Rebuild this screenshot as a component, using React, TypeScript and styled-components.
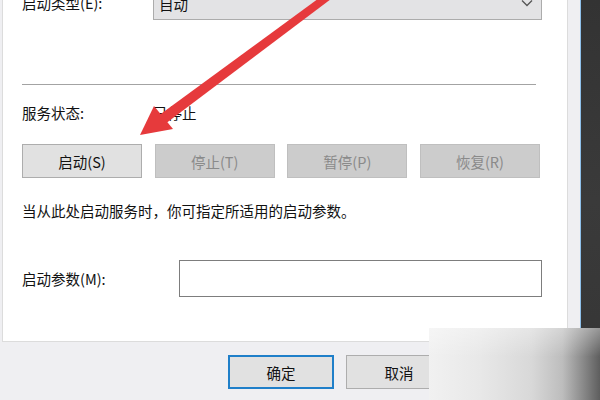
import React from 'react';
import styled, { createGlobalStyle } from 'styled-components';

const GlobalStyle = createGlobalStyle`
  html, body {
    margin: 0;
    padding: 0;
    background: #363636;
  }
  body {
    font-family: "Noto Sans CJK SC", "Microsoft YaHei", sans-serif;
  }
`;

const Screen = styled.div`
  position: relative;
  width: 600px;
  height: 400px;
  overflow: hidden;
  display: flex;
  background: #363636;
`;

const Window = styled.div`
  width: 580px;
  height: 414px;
  margin-top: -14px;
  background: #efeff2;
  border-right: 1px solid #8fc0ea;
  display: flex;
  flex-direction: column;
  flex-shrink: 0;
`;

const Desktop = styled.div`
  flex: 1;
  background: linear-gradient(180deg, #333 0%, #3a3a3a 50%, #353535 100%);
`;

const TabPage = styled.div`
  margin-left: 2px;
  width: 545px;
  background: #fff;
  border-left: 1px solid #dcdcdc;
  border-right: 1px solid #dcdcdc;
  border-bottom: 1px solid #dcdcdc;
  padding: 0 0 44px 19px;
  display: flex;
  flex-direction: column;
`;

const Row = styled.div<{ $mt?: number; $h?: number }>`
  display: flex;
  align-items: center;
  margin-top: ${({ $mt }) => $mt ?? 0}px;
  height: ${({ $h }) => $h ?? 20}px;
`;

const Label = styled.span<{ $w?: number }>`
  width: ${({ $w }) => $w ?? 131}px;
  flex-shrink: 0;
  font-size: 14.5px;
  line-height: 20px;
  color: #111;
`;

const Text = styled.span`
  font-size: 14.5px;
  line-height: 20px;
  color: #111;
  white-space: nowrap;
`;

const Combo = styled.div`
  box-sizing: border-box;
  width: 389px;
  height: 34px;
  background: #e3e3e5;
  border: 1px solid #acacac;
  display: flex;
  align-items: center;
  justify-content: space-between;
  padding: 0 8px 0 5px;
  font-size: 14.5px;
  color: #111;
`;

const Separator = styled.div`
  margin-top: 64px;
  width: 514px;
  height: 1px;
  background: #a3a3a3;
`;

const ButtonRow = styled.div`
  display: flex;
  gap: 12.67px;
  margin-top: 21px;
`;

const Button = styled.div<{ $disabled?: boolean; $w?: number; $default?: boolean }>`
  box-sizing: border-box;
  width: ${({ $w }) => $w ?? 120}px;
  height: 34px;
  display: flex;
  align-items: center;
  justify-content: center;
  font-size: 14.5px;
  background: ${({ $disabled }) => ($disabled ? '#cccccc' : '#e1e1e1')};
  border: ${({ $disabled, $default }) =>
    $default ? '2px solid #1f7fc9' : $disabled ? '1px solid #bfbfbf' : '1px solid #adadad'};
  color: ${({ $disabled }) => ($disabled ? '#8a8a8a' : '#111')};
`;

const Input = styled.div`
  box-sizing: border-box;
  width: 363px;
  height: 37px;
  background: #fff;
  border: 1px solid #7d7d7d;
`;

const Footer = styled.div`
  display: flex;
  justify-content: flex-end;
  gap: 12px;
  padding: 13px 10px 0 0;
`;

const Watermark = styled.div`
  position: absolute;
  left: 429px;
  top: 328px;
  width: 171px;
  height: 72px;
  background:
    linear-gradient(180deg, rgba(255, 255, 255, 0.35) 0%, rgba(255, 255, 255, 0) 40%),
    linear-gradient(90deg, #f1f1f1 0%, #e8e8e8 30%, #d8d8d8 60%, #bdbdbd 78%, #8a8a8a 90%, #5e5e5e 100%);
`;

const ArrowLayer = styled.svg`
  position: absolute;
  left: 0;
  top: 0;
  pointer-events: none;
`;

const Chevron = () => (
  <svg width="12" height="8" viewBox="0 0 12 8">
    <path d="M1 1.5 L6 6.5 L11 1.5" fill="none" stroke="#555" strokeWidth="1.3" />
  </svg>
);

const RedArrow = () => (
  <ArrowLayer width="600" height="400" viewBox="0 0 600 400">
    <polygon points="326,-7 331,-1 165,124 158,116" fill="#e63a3c" />
    <polygon points="140,135 154,106 173,129" fill="#e63a3c" />
  </ArrowLayer>
);

export default function App() {
  return (
    <>
      <GlobalStyle />
      <Screen>
        <Window>
          <TabPage>
            <Row $h={34}>
              <Label>启动类型(E):</Label>
              <Combo>
                <span>自动</span>
                <Chevron />
              </Combo>
            </Row>
            <Separator />
            <Row $mt={18}>
              <Label>服务状态:</Label>
              <Text>已停止</Text>
            </Row>
            <ButtonRow>
              <Button>启动(S)</Button>
              <Button $disabled>停止(T)</Button>
              <Button $disabled>暂停(P)</Button>
              <Button $disabled>恢复(R)</Button>
            </ButtonRow>
            <Row $mt={23}>
              <Text>当从此处启动服务时，你可指定所适用的启动参数。</Text>
            </Row>
            <Row $mt={39} $h={37}>
              <Label $w={157}>启动参数(M):</Label>
              <Input />
            </Row>
          </TabPage>
          <Footer>
            <Button $w={106} $default>确定</Button>
            <Button $w={106}>取消</Button>
            <Button $w={106} $disabled>应用(A)</Button>
          </Footer>
        </Window>
        <Desktop />
        <Watermark />
        <RedArrow />
      </Screen>
    </>
  );
}
